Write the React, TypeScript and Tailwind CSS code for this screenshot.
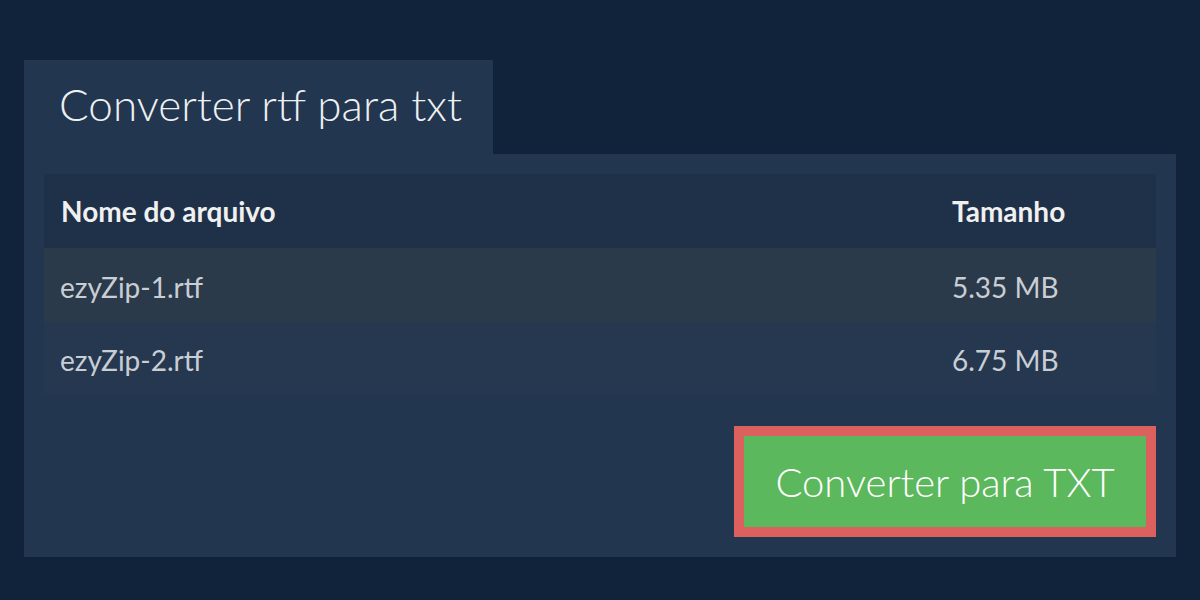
const files = [
  { name: "ezyZip-1.rtf", size: "5.35 MB" },
  { name: "ezyZip-2.rtf", size: "6.75 MB" },
];

export default function App() {
  return (
    <div
      className="w-[1200px] h-[600px] bg-[#10233a] pt-[60px] pl-[24px]"
      style={{ fontFamily: "Lato, 'Open Sans', sans-serif" }}
    >
      <div className="w-[1152px] flex flex-col">
        {/* tab */}
        <div className="w-[469px] h-[94px] bg-[#22364f] pl-[35px] flex items-center">
          <h1 className="text-[44px] font-light text-[#eef0f2] leading-none -mt-[6px]">
            Converter rtf para txt
          </h1>
        </div>

        {/* panel */}
        <div className="bg-[#22364f] p-[20px] flex flex-col">
          <div className="flex flex-col">
            <div className="flex items-center h-[74px] bg-[#1f3148] text-[28px] font-bold text-[#f0f0f0]">
              <div className="w-[908px] pl-[17px]">Nome do arquivo</div>
              <div>Tamanho</div>
            </div>
            {files.map((f, i) => (
              <div
                key={f.name}
                className={
                  i === 0
                    ? "flex items-center h-[74px] bg-[#2b3a4b] text-[28px] text-[#c9ced4] pt-[4px]"
                    : "flex items-center h-[72px] bg-[#253850] text-[28px] text-[#c9ced4] pt-[4px]"
                }
              >
                <div className="w-[908px] pl-[16px]">{f.name}</div>
                <div>{f.size}</div>
              </div>
            ))}
          </div>

          <div className="flex justify-end mt-[32px]">
            <button className="w-[422px] h-[111px] border-[10px] border-[#dc605d] bg-[#5cb85c] text-white text-[40px] font-light flex items-center justify-center">
              Converter para TXT
            </button>
          </div>
        </div>
      </div>
    </div>
  );
}
